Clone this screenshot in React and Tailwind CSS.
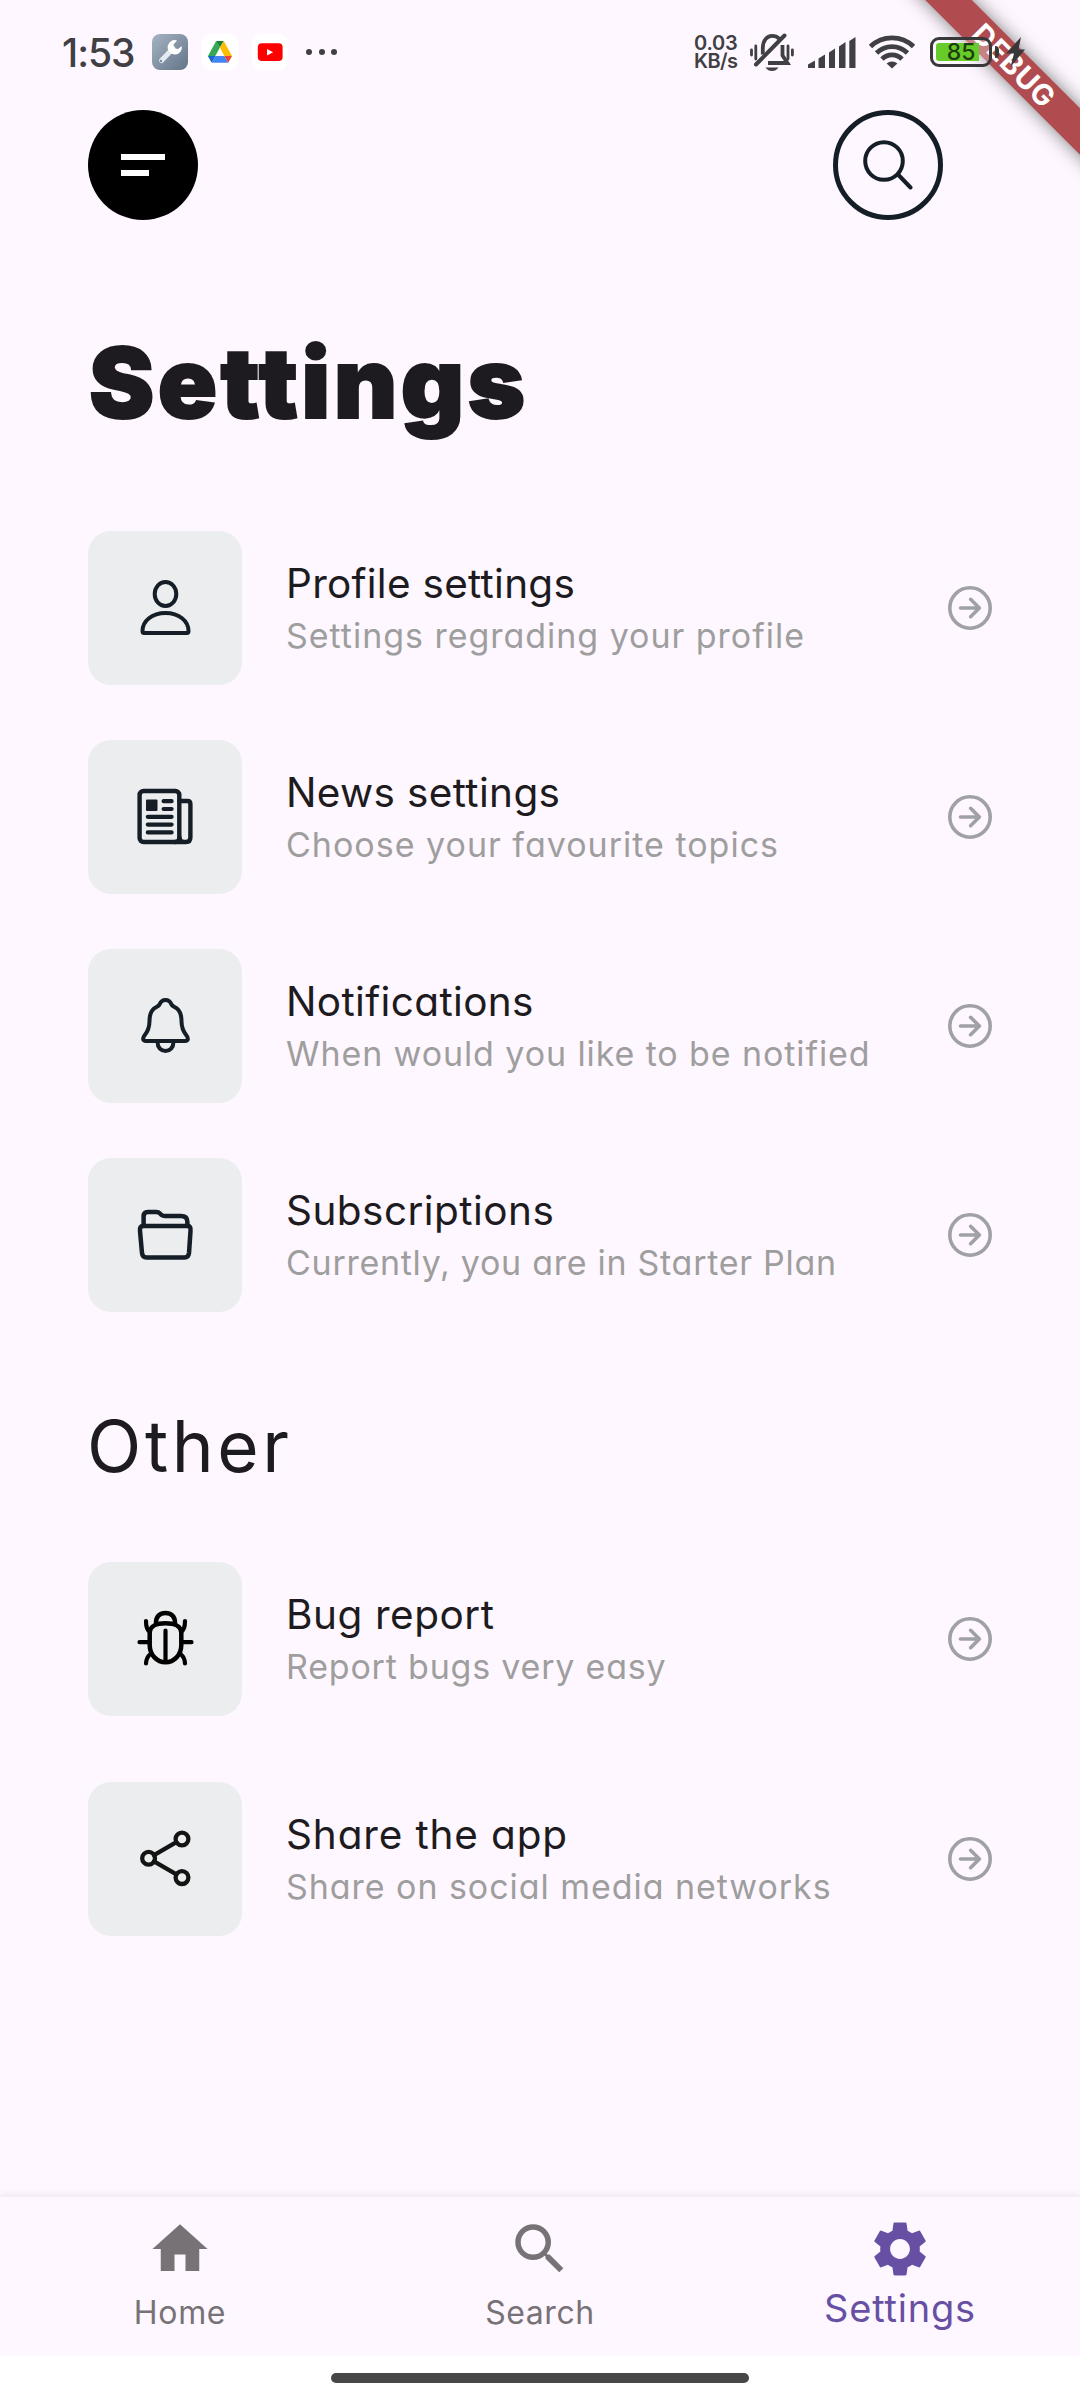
import React from 'react';
import { MdSearch, MdSettings } from 'react-icons/md';

const INK = '#151e27';

function Icon({ children, color = INK, width = 4 }) {
  return (
    <svg
      viewBox="0 0 55 55"
      className="size-[55px] overflow-visible"
      fill="none"
      stroke={color}
      strokeWidth={width}
      strokeLinecap="round"
      strokeLinejoin="round"
    >
      {children}
    </svg>
  );
}

const ProfileIcon = () => (
  <Icon>
    <ellipse cx="27.5" cy="14" rx="10.8" ry="12" />
    <path d="M4.5 51C4.5 41 14 33 27.5 33S50.5 41 50.5 51Q50.5 53 49 53H6Q4.5 53 4.5 51Z" />
  </Icon>
);

const NewsIcon = () => (
  <Icon width={4.4}>
    <rect x="1.6" y="2" width="39.7" height="51" rx="4" />
    <path d="M41.5 12H49.5Q52.4 12 52.4 15V48.5Q52.4 53 48 53H37M41.5 48.5Q41.5 53 46 53" />
    <rect x="8" y="10.5" width="11.5" height="11.5" rx="1" fill={INK} stroke="none" />
    <path d="M25.6 12.2H33.6M25.6 20H33.6M9.8 27.8H33.6M9.8 35.6H33.6M9.8 43.4H33.6" strokeWidth="4.2" />
  </Icon>
);

const BellIcon = () => (
  <Icon>
    <path d="M27.5 2C23.5 2 22.3 4.5 21.5 6.5C20.5 8.5 18 8.8 16 10.5C12 14 11.5 19 11.5 23C11.5 30 9 34.5 6.5 37.5C4.5 40 4.5 43 8 43H47C50.5 43 50.5 40 48.5 37.5C46 34.5 43.5 30 43.5 23C43.5 19 43 14 39 10.5C37 8.8 34.5 8.5 33.5 6.5C32.7 4.5 31.5 2 27.5 2Z" />
    <path d="M19.6 44.5C19.6 49.5 23 53 27.5 53S35.4 49.5 35.4 44.5" />
  </Icon>
);

const FolderIcon = () => (
  <Icon width={4.5}>
    <path d="M5 19H50Q53 19 52.5 24L51 46Q50.5 50.5 46.5 50.5H8.5Q4.5 50.5 4 46L2 24Q1.5 19 5 19Z" />
    <path d="M5.6 19V9.5Q5.6 5 9.8 5H18.5Q20.5 5 22 6.5L23.5 8Q24.8 9 27 9H43Q49.4 9 49.4 15V19" />
  </Icon>
);

const BugIcon = () => (
  <Icon color="#000000" width={4.5}>
    <path d="M27.5 12.3C36 12.3 43.3 15 43.3 22V34C43.3 44 36 51.3 27.5 51.3S11.7 44 11.7 34V22C11.7 15 19 12.3 27.5 12.3Z" />
    <path d="M18 12C18 5 22 2 27.5 2S37 5 37 12" />
    <path d="M27.5 19.5V50M1.5 31.2H11M44 31.2H53.5M8 10C8 15 8.5 19 12 21M47 10C47 15 46.5 19 43 21M8 52.5C8 48 10 45 13 42.5M47 52.5C47 48 45 45 42 42.5" strokeWidth="4.2" />
  </Icon>
);

const ShareIcon = () => (
  <Icon color="#141414" width={4.3}>
    <circle cx="44" cy="8" r="6.4" />
    <circle cx="10.6" cy="27.3" r="6.4" />
    <circle cx="44" cy="46.6" r="6.4" />
    <path d="M16 24.2L38.4 11.2M16 30.4L38.4 43.4" />
  </Icon>
);

const ArrowIcon = () => (
  <svg viewBox="0 0 44 44" className="size-[44px]" fill="none" stroke="#9fa1a6" strokeWidth="3.6" strokeLinecap="round" strokeLinejoin="round">
    <circle cx="22" cy="22" r="20.2" />
    <path d="M12.5 22H31M22.6 13.3L31.4 22L22.6 30.7" />
  </svg>
);

const SETTINGS = [
  { icon: ProfileIcon, title: 'Profile settings', tt: 'tracking-[0.27px]', sub: 'Settings regrading your profile', st: 'tracking-[0.97px]' },
  { icon: NewsIcon, title: 'News settings', tt: 'tracking-[0.35px]', sub: 'Choose your favourite topics', st: 'tracking-[1px]' },
  { icon: BellIcon, title: 'Notifications', tt: 'tracking-[0.35px]', sub: 'When would you like to be notified', st: 'tracking-[0.9px]' },
  { icon: FolderIcon, title: 'Subscriptions', tt: 'tracking-[0.45px]', sub: 'Currently, you are in Starter Plan', st: 'tracking-[0.72px]' },
];

const OTHER = [
  { icon: BugIcon, title: 'Bug report', tt: 'tracking-[0.55px]', sub: 'Report bugs very easy', st: 'tracking-[0.8px]' },
  { icon: ShareIcon, title: 'Share the app', tt: 'tracking-[0.85px]', sub: 'Share on social media networks', st: 'tracking-[0.95px]' },
];

function Row({ item }) {
  const Glyph = item.icon;
  return (
    <div className="flex h-[154px] items-center pr-[88px] pl-[88px]">
      <div className="flex size-[154px] items-center justify-center rounded-[23px] bg-[#ebedee]">
        <Glyph />
      </div>
      <div className="ml-[44px] flex-1 pt-[4px] whitespace-nowrap [font-feature-settings:'cv11']">
        <div className={`text-[40.5px] leading-[52px] text-[#1d1b20] ${item.tt}`}>{item.title}</div>
        <div className={`text-[34px] leading-[52px] text-[#9e9e9e] ${item.st}`}>{item.sub}</div>
      </div>
      <ArrowIcon />
    </div>
  );
}

function StatusBar() {
  return (
    <div className="relative z-20 flex h-[110px] items-start justify-between text-[#404044]">
      <div className="mt-[34px] flex h-[36px] items-center pl-[62px]">
        <div className="w-[90px] text-[39px] leading-[37px] font-medium tracking-[-1px]">1:53</div>
        <svg viewBox="0 0 36 36" className="size-[36px]">
          <defs>
            <linearGradient id="tool" x1="0" y1="0" x2="1" y2="1">
              <stop offset="0" stopColor="#a5b4c4" />
              <stop offset="1" stopColor="#637487" />
            </linearGradient>
          </defs>
          <rect width="36" height="36" rx="8" fill="url(#tool)" />
          <path d="M9.5 26.5L21 14.5" stroke="#e6ebf1" strokeWidth="5" strokeLinecap="round" />
          <path d="M25 6.5A7.2 7.2 0 1 0 29.8 12L26 15L22 14.2L21.5 10.5Z" fill="#fff" />
          <circle cx="9" cy="27" r="1.2" fill="#7b8a9b" />
        </svg>
        <svg viewBox="0 0 36 36" className="ml-[14px] size-[36px]">
          <rect width="36" height="36" rx="9" fill="#fff" />
          <path d="M14.2 7L17.9 13.4L9.7 28.5L6 22Z" fill="#34a853" />
          <path d="M14.2 7H21.8L17.9 13.5Z" fill="#188038" />
          <path d="M21.8 7L30 22H22.4L17.9 13.5Z" fill="#fbbc04" />
          <path d="M6 22H13.4L9.7 28.5Z" fill="#1967d2" />
          <path d="M13.4 22H22.4L26.2 28.8H9.7Z" fill="#4285f4" />
          <path d="M22.4 22H30L26.2 28.8Z" fill="#ea4335" />
        </svg>
        <svg viewBox="0 0 36 36" className="ml-[14px] size-[36px]">
          <rect width="36" height="36" rx="9" fill="#fff" />
          <rect x="5.8" y="9.3" width="24.8" height="17.6" rx="4" fill="#f00" />
          <path d="M15 15V21.4L21.2 18.2Z" fill="#fff" />
        </svg>
        <div className="ml-[18px] flex gap-[6.5px]">
          <span className="size-[6px] rounded-full bg-current" />
          <span className="size-[6px] rounded-full bg-current" />
          <span className="size-[6px] rounded-full bg-current" />
        </div>
      </div>
      <div className="mt-[33px] flex h-[38px] items-center pr-[55px]">
        <div className="w-[56px] text-[20px] leading-[18.5px] font-semibold">
          <div className="tracking-[-0.2px]">0.03</div>
          <div className="tracking-[-0.6px]">KB/s</div>
        </div>
        <svg viewBox="0 0 44 38" className="h-[38px] w-[44px]" fill="none" stroke="currentColor" strokeLinecap="round">
          <path d="M1.5 17V22M5.8 13V26M38 13V26M42.4 17V22" strokeWidth="2.8" />
          <path d="M12.8 21.5V15C12.8 7.5 17 2.8 22 2.8C25 2.8 27.5 3.8 29.2 5.6M32.5 12V22.5L37.5 30H18" strokeWidth="3.8" strokeLinecap="butt" />
          <path d="M6 31.5L34.5 2.5" strokeWidth="4" />
          <path d="M15.5 34.5H28.5Q26 38 22 38T15.5 34.5Z" fill="currentColor" stroke="none" />
        </svg>
        <svg viewBox="0 0 48 31" className="ml-[14px] h-[31px] w-[48px]" fill="currentColor">
          <path d="M0 31V27.5L7 23.5V31ZM10.5 31V21.5L17 17.5V31ZM21 31V15.5L27 11.5V31ZM31 31V9.5L37.5 5V31ZM41.3 31V4L47.5 0V31Z" />
        </svg>
        <svg viewBox="0 0 46 34" className="ml-[13px] h-[34px] w-[46px]" fill="none" stroke="currentColor" strokeWidth="4.8">
          <path d="M1.5 11.5C13.5 0 32.5 0 44.5 11.5" />
          <path d="M7.5 18C16.5 9.5 29.5 9.5 38.5 18" />
          <path d="M13 24.2C18.5 18.5 27.5 18.5 33 24.2" />
          <path d="M23 33.5L17.6 28.6C20.5 25.7 25.5 25.7 28.4 28.6Z" fill="currentColor" stroke="none" />
        </svg>
        <div className="ml-[15px] flex h-[30px] w-[62px] items-center rounded-[9px] border-[3.5px] border-[#38383b] bg-white/30 p-[2.5px]">
          <div className="flex h-[18px] w-[43px] items-center justify-end rounded-l-[3px] bg-[#66cc29] pr-[3px] text-[23px] leading-[18px] font-medium tracking-[0px] text-[#1f3d0d]">85</div>
        </div>
        <div className="ml-[3px] h-[12px] w-[4px] rounded-r-[4px] bg-[#38383b]" />
        <svg viewBox="0 0 19 30" className="ml-[7px] h-[30px] w-[19px]" fill="#38383b">
          <path d="M15 0L0 16.5H8L4.5 30L19 12.5H12.5Z" />
        </svg>
      </div>
    </div>
  );
}

function DebugBanner() {
  return (
    <div className="pointer-events-none absolute top-0 right-0 z-10 size-[240px] overflow-hidden">
      <div className="absolute top-[49.2px] left-[24.25px] flex h-[33px] w-[300px] rotate-45 items-center justify-center bg-[#b04c4f] shadow-[0_0_18px_rgba(0,0,0,0.5)]">
        <span className="text-[29px] leading-[33px] font-bold tracking-[0.7px] text-white">DEBUG</span>
      </div>
    </div>
  );
}

export default function App() {
  return (
    <div className="relative flex h-[2400px] w-[1080px] flex-col overflow-hidden bg-[#fef7ff] font-['Inter','Liberation_Sans',sans-serif]">
      <StatusBar />
      <DebugBanner />
      <div className="flex h-[110px] shrink-0 justify-between pr-[137px] pl-[88px]">
        <button className="flex size-[110px] flex-col justify-center gap-[10px] rounded-full bg-black pl-[33px]">
          <span className="h-[6px] w-[44px] bg-white" />
          <span className="h-[6px] w-[28px] bg-white" />
        </button>
        <button className="flex size-[110px] items-center justify-center rounded-full border-[5.5px] border-[#151e27]">
          <svg viewBox="0 0 50 50" className="size-[50px]" fill="none" stroke={INK} strokeWidth="4" strokeLinecap="round">
            <circle cx="21" cy="21" r="18.8" />
            <path d="M35 34.5L47.5 47.5" />
          </svg>
        </button>
      </div>
      <h1 className="mt-[91px] shrink-0 pl-[89px] text-[98px] leading-[144px] font-black tracking-[3.4px] text-[#1d1b20] [-webkit-text-stroke:2px_#1d1b20]">Settings</h1>
      <div className="mt-[75.67px] flex shrink-0 flex-col gap-[55px]">
        {SETTINGS.map((item) => <Row key={item.title} item={item} />)}
      </div>
      <h2 className="mt-[82.33px] shrink-0 pl-[87px] text-[71px] leading-[104px] tracking-[3.6px] text-[#1d1b20]">Other</h2>
      <div className="mt-[64px] flex shrink-0 flex-col gap-[66px]">
        {OTHER.map((item) => <Row key={item.title} item={item} />)}
      </div>
      <nav className="mt-auto grid h-[159px] shrink-0 grid-cols-3 bg-[#fef7ff] pt-[19.5px] text-[#777276] shadow-[0_-3px_7px_rgba(0,0,0,0.06)]">
        <div className="flex flex-col items-center">
          <svg viewBox="0 0 24 24" className="size-[66px]" fill="currentColor"><path d="M10 20v-6h4v6h5v-8h3L12 3 2 12h3v8z" /></svg>
          <span className="mt-[9px] text-[32px] leading-[44px] tracking-[0.67px]">Home</span>
        </div>
        <div className="flex flex-col items-center">
          <MdSearch className="size-[66px]" />
          <span className="mt-[9px] text-[32px] leading-[44px] tracking-[0.55px]">Search</span>
        </div>
        <div className="flex flex-col items-center text-[#6750a4]">
          <MdSettings className="size-[66px]" />
          <span className="text-[38px] leading-[52px] tracking-[0.8px]">Settings</span>
        </div>
      </nav>
      <div className="flex h-[44.33px] shrink-0 justify-center bg-white pt-[17px]">
        <div className="h-[10.5px] w-[418px] rounded-full bg-[#474747]" />
      </div>
    </div>
  );
}
